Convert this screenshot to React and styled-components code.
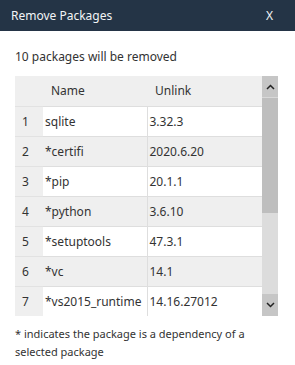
import React from "react";
import styled, { createGlobalStyle } from "styled-components";

const GlobalStyle = createGlobalStyle`
  html, body {
    margin: 0;
    padding: 0;
    background: #fff;
  }
  body {
    font-family: "Noto Sans", "Open Sans", sans-serif;
    color: #333;
  }
`;

const Dialog = styled.div`
  width: 295px;
  height: 365px;
  display: flex;
  flex-direction: column;
  background: #fff;
  overflow: hidden;
`;

const TitleBar = styled.div`
  height: 31px;
  background: #243446;
  color: #f2f4f6;
  display: flex;
  align-items: center;
  justify-content: space-between;
  padding: 0 22px 0 11px;
  font-size: 12px;
`;

const Close = styled.span`
  font-size: 12px;
`;

const Body = styled.div`
  padding: 17px 17px 0 15px;
  display: flex;
  flex-direction: column;
`;

const Summary = styled.div`
  font-size: 12px;
  height: 28px;
  line-height: 18px;
`;

const TableWrap = styled.div`
  display: flex;
  height: 240px;
`;

const Viewport = styled.div`
  flex: 1;
  overflow: hidden;
`;

const Table = styled.table`
  width: 100%;
  border-collapse: collapse;
  font-size: 12px;
  table-layout: fixed;

  th, td {
    box-sizing: border-box;
  }
`;

const HeadCell = styled.th`
  height: 30px;
  padding: 0 0 0 ${(p) => (p.$pad ? 8 : 0)}px;
  text-align: left;
  font-weight: normal;
  background: #efefef;
  width: ${(p) => p.$w || "auto"};
`;

const Row = styled.tr`
  height: 30px;
`;

const IndexCell = styled.td`
  background: #efefef;
  padding-left: 7px;
  border-top: 1px solid #e2e2e2;
`;

const Cell = styled.td`
  background: ${(p) => (p.$odd ? "#fff" : "#efefef")};
  padding-left: 2px;
  border-top: 1px solid #dedede;
  border-left: ${(p) => (p.$first ? "none" : "1px solid #dedede")};
  white-space: nowrap;
  overflow: hidden;
`;

const Scrollbar = styled.div`
  width: 16px;
  display: flex;
  flex-direction: column;
  background: #dcdcdc;
`;

const ScrollButton = styled.div`
  height: ${(p) => p.$h}px;
  background: #c6c6c6;
  display: flex;
  align-items: center;
  justify-content: center;
  border-bottom: ${(p) => (p.$top ? "1px solid #d8d8d8" : "none")};
`;

const Thumb = styled.div`
  height: 115px;
  background: #bebebe;
`;

const Track = styled.div`
  flex: 1;
`;

const Note = styled.div`
  font-size: 11px;
  line-height: 18px;
  margin-top: 9px;
`;

const packages = [
  ["sqlite", "3.32.3"],
  ["*certifi", "2020.6.20"],
  ["*pip", "20.1.1"],
  ["*python", "3.6.10"],
  ["*setuptools", "47.3.1"],
  ["*vc", "14.1"],
  ["*vs2015_runtime", "14.16.27012"],
  ["*wheel", "0.34.2"],
  ["*wincertstore", "0.2"],
  ["*zlib", "1.2.11"],
];

// only the rows that fit in the scroll viewport are rendered
const VISIBLE_ROWS = 7;

const Chevron = ({ up }) => (
  <svg width="9" height="6" viewBox="0 0 9 6">
    <path
      d={up ? "M1 5 L4.5 1.5 L8 5" : "M1 1 L4.5 4.5 L8 1"}
      fill="none"
      stroke="#222"
      strokeWidth="1.5"
    />
  </svg>
);

export default function App() {
  return (
    <>
      <GlobalStyle />
      <Dialog>
        <TitleBar>
          <span>Remove Packages</span>
          <Close>X</Close>
        </TitleBar>
        <Body>
          <Summary>{packages.length} packages will be removed</Summary>
          <TableWrap>
            <Viewport>
              <Table>
                <thead>
                  <tr>
                    <HeadCell $w="28px" />
                    <HeadCell $w="104px" $pad>Name</HeadCell>
                    <HeadCell $pad>Unlink</HeadCell>
                  </tr>
                </thead>
                <tbody>
                  {packages.slice(0, VISIBLE_ROWS).map(([name, ver], i) => (
                    <Row key={name}>
                      <IndexCell>{i + 1}</IndexCell>
                      <Cell $odd={i % 2 === 0} $first>{name}</Cell>
                      <Cell $odd={i % 2 === 0}>{ver}</Cell>
                    </Row>
                  ))}
                </tbody>
              </Table>
            </Viewport>
            <Scrollbar>
              <ScrollButton $h={21} $top>
                <Chevron up />
              </ScrollButton>
              <Thumb />
              <Track />
              <ScrollButton $h={22}>
                <Chevron />
              </ScrollButton>
            </Scrollbar>
          </TableWrap>
          <Note>
            * indicates the package is a dependency of a selected package
          </Note>
        </Body>
      </Dialog>
    </>
  );
}
